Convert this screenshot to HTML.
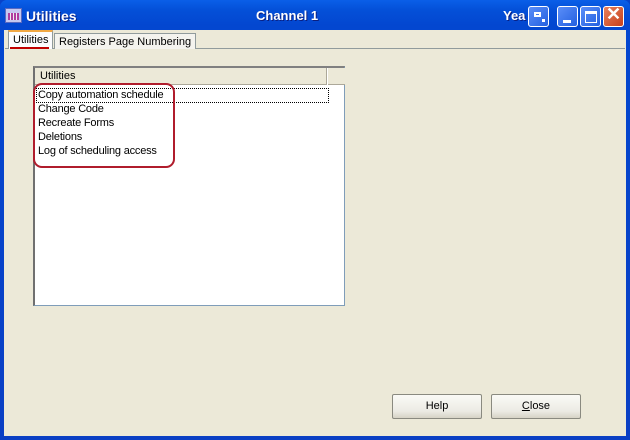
<!DOCTYPE html>
<html><head><style>
*{margin:0;padding:0;box-sizing:border-box}
body{width:630px;height:440px;overflow:hidden;font-family:"Liberation Sans",Tahoma,sans-serif;font-size:11px;background:#0842c9;position:relative}
.win{position:absolute;left:0;top:0;width:630px;height:440px;background:linear-gradient(#0a5fe8,#0450d8 10px,#0347d0 25px,#0a3fc4);border-radius:7px 7px 0 0}
.body{position:absolute;left:4px;top:30px;width:622px;height:406px;background:#ece9d8}
.title{position:absolute;left:26px;top:8px;color:#fff;font-weight:bold;font-size:14px;text-shadow:1px 1px #0a1f80}
.ab{position:absolute;top:4px;color:#fff;font-weight:bold;font-size:13px;text-shadow:1px 1px #0a1f80}
.ico{position:absolute;left:5px;top:8px;width:17px;height:15px;background:#c6c8f0;border:1px solid #5a6ac0}
.ico:after{content:"";position:absolute;left:2px;top:4px;width:11px;height:7px;background:repeating-linear-gradient(90deg,#b03ca0 0 2px,#eee 2px 3px)}
.tb{position:absolute;top:6px;width:21px;height:21px;border:1px solid #fff;border-radius:3px;background:linear-gradient(135deg,#5a8ef8,#2460e0)}
.tb.x{background:linear-gradient(135deg,#e8805c,#c6401c)}
.tab{position:absolute;top:32px;height:17px;padding:2px 4px;font-size:11px;color:#000;border:1px solid #919b9c;border-bottom:none;background:#f4f3ee}
.panel{position:absolute;left:5px;top:48px;width:620px;height:388px;border-top:1px solid #919b9c}
.list{position:absolute;left:33px;top:66px;width:312px;height:240px;background:#fff;border:1px solid #7f9db9;border-left:2px solid #707070;border-top:2px solid #808080}
.hdr{position:absolute;left:0;top:0;width:292px;height:17px;background:#ece9d8;border-bottom:1px solid #aca899;border-right:1px solid #aca899;padding:2px 5px}
.hdr2{position:absolute;left:293px;top:0;width:17px;height:17px;background:#ece9d8;border-bottom:1px solid #aca899}
.it{position:absolute;left:3px;font-size:11px;color:#000;line-height:14px;letter-spacing:-0.2px}
.btn{position:absolute;top:394px;width:90px;height:25px;border:1px solid #8a8a80;border-radius:2px;background:linear-gradient(#fafaf6,#ecebe4 70%,#d6d3c6);text-align:center;line-height:23px;font-size:11px}
</style></head><body>
<div class="win"></div>
<div class="ico"></div>
<div class="title">Utilities</div>
<div class="ab" style="left:256px;top:8px">Channel 1</div>
<div class="ab" style="left:503px;top:8px">Yea</div>
<div class="tb" style="left:528px"><div style="position:absolute;left:5px;top:5px;width:7px;height:5px;border:2px solid #fff;border-top-width:2px"></div><div style="position:absolute;left:13px;top:12px;width:3px;height:3px;background:#fff"></div></div>
<div class="tb" style="left:557px"><div style="position:absolute;left:5px;top:13px;width:8px;height:3px;background:#fff"></div></div>
<div class="tb" style="left:580px"><div style="position:absolute;left:4px;top:4px;width:12px;height:12px;border:1px solid #fff;border-top-width:3px"></div></div>
<div class="tb x" style="left:603px"><div style="position:absolute;left:2px;top:-3px;color:#fff;font-size:18px;font-weight:bold">✕</div></div>
<div class="body"></div>
<div class="panel"></div>
<div class="tab" style="left:8px;top:30px;height:19px;background:#fcfcfe;border-top:2px solid #f1a844">Utilities</div>
<div style="position:absolute;left:10px;top:47px;width:39px;height:2px;background:#c00000"></div>
<div class="tab" style="left:54px;top:33px;height:16px">Registers Page Numbering</div>
<div class="list">
<div class="hdr">Utilities</div><div class="hdr2"></div>
<div style="position:absolute;left:1px;top:20px;width:293px;height:15px;border:1px dotted #000"></div>
<div class="it" style="top:20px">Copy automation schedule</div>
<div class="it" style="top:34px">Change Code</div>
<div class="it" style="top:48px">Recreate Forms</div>
<div class="it" style="top:62px">Deletions</div>
<div class="it" style="top:76px">Log of scheduling access</div>
</div>
<div style="position:absolute;left:33px;top:83px;width:142px;height:85px;border:2px solid #b01c2c;border-radius:9px"></div>
<div class="btn" style="left:392px">Help</div>
<div class="btn" style="left:491px"><u>C</u>lose</div>
</body></html>
